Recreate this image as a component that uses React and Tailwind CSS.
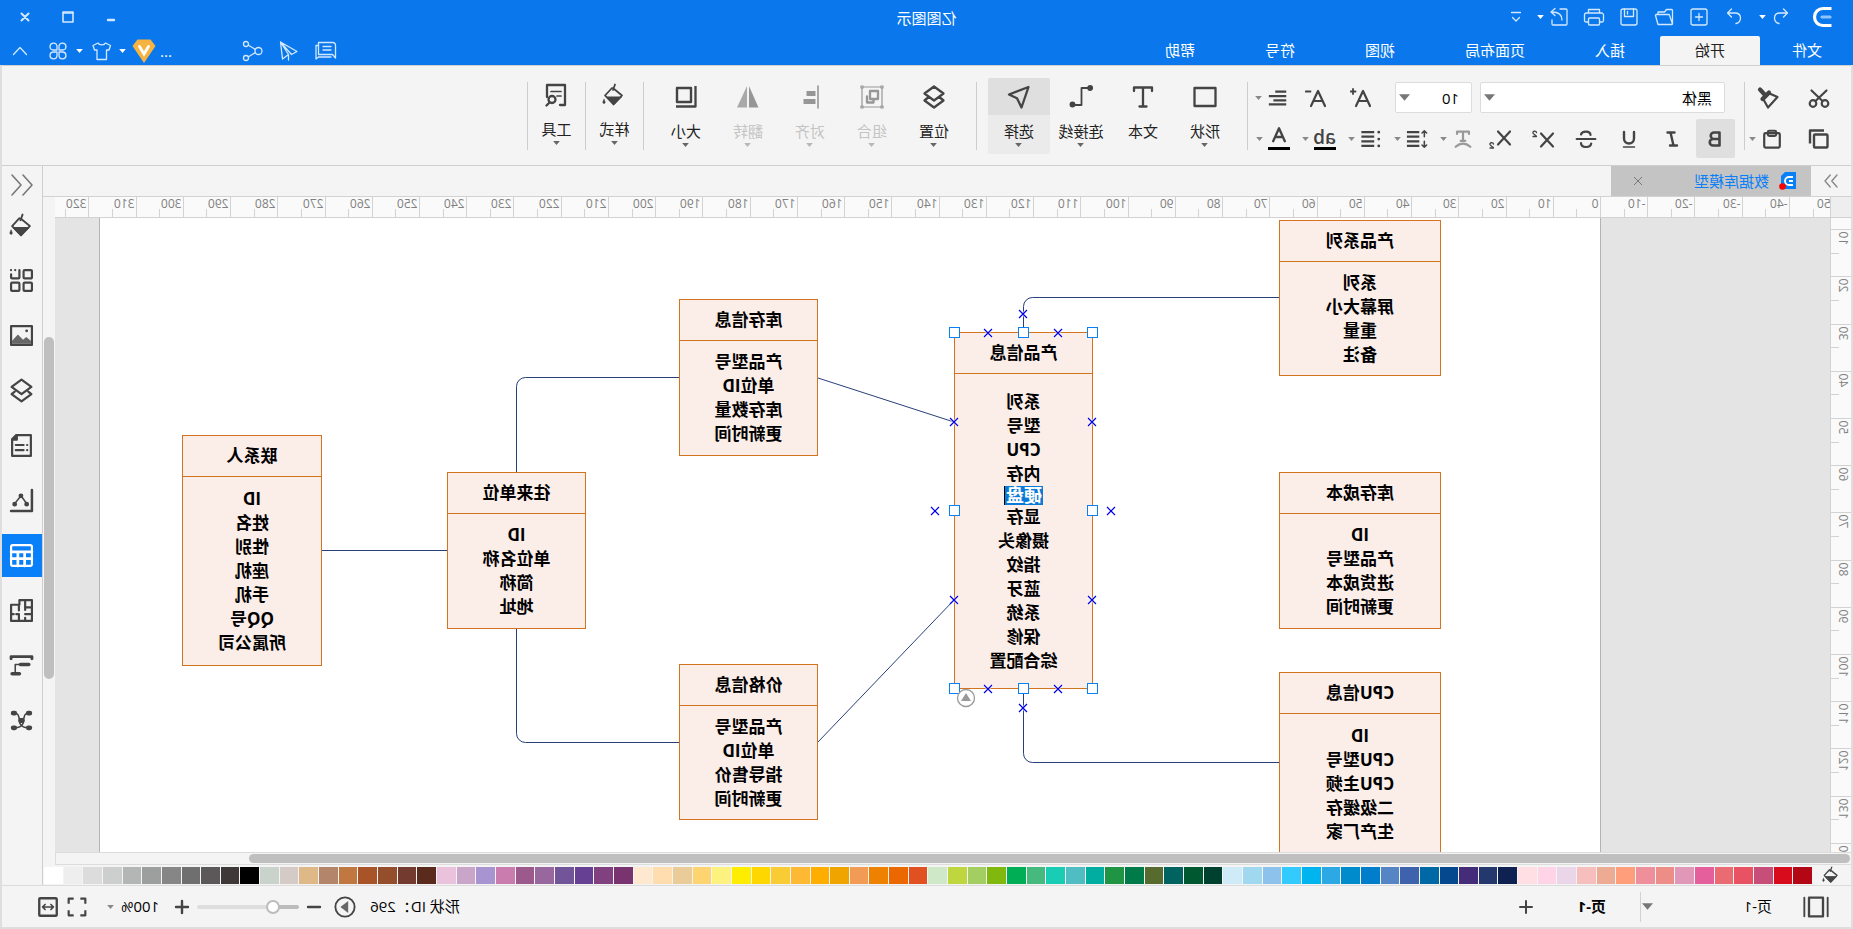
import React, { useState } from 'react';

const Icon = ({ size = 24, width = 1.4, className = '', children }) => (
  <svg
    width={size}
    height={size}
    viewBox="0 0 24 24"
    fill="none"
    stroke="currentColor"
    strokeWidth={width}
    strokeLinecap="round"
    strokeLinejoin="round"
    aria-hidden="true"
    className={`shrink-0 ${className}`}
  >
    {children}
  </svg>
);

const Caret = ({ big }) => (
  <svg width={big ? 11 : 7} height={big ? 7 : 4} viewBox="0 0 10 6" fill="currentColor" aria-hidden="true" className="shrink-0">
    <path d="M0 0h10L5 6z" />
  </svg>
);

const icons = {
  undo: <path d="M9.500 4 5.500 8l4 4M5.500 8H13c3.500 0 5.500 2.200 5.500 5 0 3-2 5-4.500 5.500" />,
  redo: <path d="M14.500 4l4 4-4 4M18.500 8H11c-3.500 0-5.500 2.200-5.500 5 0 3 2 5 4.500 5.500" />,
  add: <><rect x="4" y="4" width="16" height="16" rx="2" /><path d="M12 8.500v7M8.500 12h7" /></>,
  open: <path d="M3.500 19V5.500a1 1 0 0 1 1-1h5l2 2.500h6.500v2.500M3.500 19a1 1 0 0 0 1 .5h13.500l2.500-9a.8.8 0 0 0-.8-1H7.500a1 1 0 0 0-1 .7z" />,
  save: <><rect x="4" y="4" width="16" height="16" rx="2" /><path d="M7.500 4v7.500h9V4M13.500 6.500v2.500" /></>,
  print: <><path d="M6.500 8V4.500h11V8M6.500 17H4a1.500 1.500 0 0 1-1.500-1.500V10A2 2 0 0 1 4.500 8h15a2 2 0 0 1 2 2v5.500A1.500 1.500 0 0 1 20 17h-2.500" /><rect x="6.500" y="13" width="11" height="7" rx="1" /></>,
  exportFile: <><path d="M11 4H5a1 1 0 0 0-1 1v14a1 1 0 0 0 1 1h13a1 1 0 0 0 1-1v-4" /><path d="M9 15c0-5 3-8 10-8M16 3.500 20 7l-4 3.500" /></>,
  more: <path d="M7.500 7.500h9M8.500 12.500l3.500 3.500 3.500-3.500" />,
  close: <path d="M8.500 8.500l7 7M15.500 8.500l-7 7" />,
  maximize: <><rect x="7" y="7" width="10" height="10" /><path d="M7 8h10" /></>,
  minimize: <path d="M9 15h6" />,
  message: <><path d="M5 3.500h14.500V15.500H5.500l-3 3.500V6a2.500 2.500 0 0 1 2.500-2.500z" /><path d="M7 7.500h8M7 11h8M19.500 6.500H22v13.500l-2.500-2H7" /></>,
  send: <path d="M20.500 3 4 12.500l5.500 3zM20.500 3 18.500 20l-6-4.500zM20.500 3 12.500 15.500V21" />,
  share: <><circle cx="5.500" cy="12" r="3.500" /><circle cx="18" cy="5" r="2.500" /><circle cx="18" cy="19" r="2.500" /><path d="M8.600 10.400 11 9l4.500-2.700M8.600 13.600 11 15l4.500 2.700" /></>,
  shirt: <path d="M8.500 4 3.500 6.500 5 11h2.500v9.500h9.500V11h2.500L21 6.500 16 4c-1 2.500-6.500 2.500-7.500 0z" />,
  clover: <><path d="M11 11H7a3.500 3.500 0 1 1 4-4zM13 11h4a3.500 3.500 0 1 0-4-4zM11 13H7a3.500 3.500 0 1 0 4 4zM13 13h4a3.500 3.500 0 1 1-4 4z" /></>,
  up: <path d="M5.500 15.500 12 8.500l6.500 7" />,
  cut: <><circle cx="6" cy="17.500" r="3.300" /><circle cx="18" cy="17.500" r="3.300" /><path d="M4.500 4.500 15.500 15M19.500 4.500 8.500 15" /></>,
  painter: <><path d="M3.500 11 11.500 7.500l6 6-4.500 8z" /><path d="M12 6.500 18.500 13M15.500 9.500l5.500-6" strokeWidth="4.200" /></>,
  copy: <><rect x="3.500" y="7.500" width="13.500" height="13" rx="1" /><path d="M7 3.500h14v13" strokeLinecap="butt" /></>,
  paste: <><rect x="3.500" y="5.500" width="17" height="16" rx="1.500" /><rect x="7.500" y="3" width="9" height="5.500" rx="1.500" /></>,
  bigger: <><path d="M4 20l7-15 7 15M6.500 15h9" /><path d="M18.500 5.500h5M21 3v5" strokeWidth="1.800" /></>,
  smaller: <><path d="M4 20l7-15 7 15M6.500 15h9" /><path d="M18.500 5.500h5" strokeWidth="1.800" /></>,
  align: <path d="M3 5h12M3 10h19M3 14.500h14M3 19h19" strokeLinecap="butt" />,
  bold: <path d="M7.500 5.500h5.500a3.200 3.200 0 0 1 0 6.500H7.500zM7.500 12h6.500a3.200 3.200 0 0 1 0 6.500H7.500z" />,
  italic: <path d="M9.500 5.500h7M7 18.500h7M13.500 5.500l-3 13" />,
  underline: <><path d="M7 5v6.500a5 5 0 0 0 10 0V5" /><path d="M6.500 20h11" strokeWidth="1.500" /></>,
  strike: <><path d="M17 7.500C16 3.500 7.500 3.500 7.500 8M6.800 16.500c1 5 10.200 4.500 10.200-.5" /><path d="M2.500 12h19" strokeWidth="1.800" /></>,
  lineSpacing: <><path d="M9.500 4.500h13.500M9.500 9.500h13.500M9.500 14.500h13.500M9.500 19.500h13.500" strokeLinecap="butt" /><path d="M4 3v6.500M1.500 5.500 4 3 6.500 5.500M4 14.500V21M1.500 18.500 4 21l2.500-2.500" strokeWidth="1.700" /></>,
  bullets: <><path d="M8.500 4.500h14M8.500 9.500h14M8.500 14.500h14M8.500 19.500h14" strokeLinecap="butt" /><path d="M3.500 4.500h.1M3.500 12h.1M3.500 19.500h.1" strokeWidth="3" /></>,
  textArc: <><path d="M5.500 6.500V4h13v2.500M12 4v10M9.500 14h5" /><path d="M4 20.500c5-4.500 11-4.500 16 0" /></>,
  fontColor: <path d="M5 17 12 1.500 19 17M7.500 12h9" />,
  shape: <rect x="1.500" y="3" width="21" height="18" />,
  text: <path d="M3 6V2.500h18V6M12 2.500v19M8.500 21.500h7" />,
  connector: <><path d="M3 3h8.500v17h9" strokeWidth="1.800" /><circle cx="2.800" cy="3" r="1.800" fill="currentColor" /><circle cx="20.500" cy="19.500" r="1.800" fill="currentColor" /></>,
  select: <path d="M2.500 2 22 9.500l-8 3.800L9.500 22.500z" />,
  layers: <path d="M12 1.500 21.500 8.500 12 15.500 2.500 8.500zM5.500 13 2.500 15.500 12 22.500l9.500-7-3-2.500" />,
  group: <><rect x="2" y="2" width="20" height="20" strokeWidth="1.200" /><path d="M1 1h2v2H1zM21 1h2v2h-2zM1 21h2v2H1zM21 21h2v2h-2z" strokeWidth="1.200" fill="#f4f4f4" /><rect x="6" y="6" width="8" height="8" /><path d="M17 11.500v6h-6.500v-2" /></>,
  alignObj: <><path d="M4 1v22" strokeWidth="1.600" /><path d="M6.500 8.500h9M6.500 16.500h12" strokeWidth="5" strokeLinecap="butt" /></>,
  flip: <><path d="M11 1v21.500H1.500z" fill="currentColor" stroke="none" /><path d="M13 1v21.500h10z" fill="currentColor" stroke="none" opacity=".8" /></>,
  sizeIcon: <><rect x="7" y="3" width="14" height="14" strokeWidth="2.400" /><path d="M2.500 1v20.500H22" strokeLinecap="butt" /></>,
  bucket: <><path d="M11 1.500 13 7M12.500 5.500 4 12.500l8.500 9 8.500-9L14 5" strokeWidth="1.800" /><path d="M5 14h15l-7.500 7.500z" fill="currentColor" strokeWidth="1" /><path d="M22 16.500c1.800 2.500 1.200 4 0 4s-1.800-1.500 0-4z" fill="currentColor" strokeWidth=".6" /></>,
  tools: <><path d="M8 22H3V2h18V14" /><path d="M7 8.500h10M7 13h4" strokeWidth="1.700" /><circle cx="16" cy="16.500" r="3.500" /><path d="M18.500 19.500l3 3" /></>,
  right: <path d="M4 4l7 8-7 8M13 4l7 8-7 8" />,
  left: <path d="M11 2 2 12l9 10M22 2l-9 10 9 10" />,
  grid: <><rect x="2" y="2" width="8" height="8" rx="1" /><rect x="2" y="14" width="8" height="8" rx="1" /><rect x="14" y="14" width="8" height="8" rx="1" /><path d="M14 2v7a1 1 0 0 0 1 1h6a1 1 0 0 0 1-1V6M18 2h.1M22 2h.1" /></>,
  image: <><rect x="2" y="3" width="20" height="18" /><path d="M3 20v-3l4.500-3.500 3 2.500L15.500 11l5.500 6v3z" fill="currentColor" stroke="none" opacity=".8" /><path d="M7 7.500h.1" strokeWidth="2.600" /></>,
  doc: <><path d="M3 2h14l4 4v16H3z" /><path d="M16.500 2v4.500H21z" fill="currentColor" /><path d="M6.500 11.500h.1M6.500 16.500h.1M10 11.500h7.500M10 16.500h7.500" /></>,
  chart: <><path d="M2 2v20h20" strokeWidth="2.400" /><path d="M7 15 12.500 7.500l6 7.500" strokeWidth="1.500" /><path d="M7 15.500h.1M12.500 7.500h.1M18.500 15.500h.1" strokeWidth="4.500" /></>,
  table: <><rect x="2" y="2" width="20" height="20" rx="1.500" /><path d="M2 8.500h20M2 15h20M9 8.500V22M15.500 8.500V22" strokeWidth="2.600" /></>,
  floor: <><path d="M2 2h12v4.500h8V22H2zM2 9h6.500V2M8.500 9v2.500M2 15.500h6.500M8.500 22v-3M14.500 6.500V12M14.500 22v-6.500H17M19.500 15.500H22" /></>,
  presentation: <><path d="M2 3.500h20M2 3.500v2M22 3.500v2" strokeWidth="2.800" /><path d="M5 11h8M14 20h7" strokeWidth="3.400" /><path d="M13 11h5v9" strokeWidth="1.500" /></>,
  mindmap: <><path d="M6 5c5 0 2 7 6 7s1 7-6 7M18 5c-5 0-2 7-6 7s-1 7 6 7" strokeWidth="1.500" /><path d="M4 5h1.500M4 19h1.500M18.500 5H20M18.500 19H20M11 12h2" strokeWidth="4.600" /></>,
  pages: <><rect x="6" y="4" width="12" height="16" /><path d="M2 4v16M22 4v16" strokeWidth="1.600" /></>,
  plus: <path d="M12 6v12M6 12h12" />,
  minus: <path d="M6 12h12" />,
  play: <><circle cx="12" cy="12" r="10.500" /><path d="M8.500 5.500v13l8.500-6.500z" fill="currentColor" stroke="none" opacity=".8" /></>,
  fullscreen: <path d="M2 8V2h6M16 2h6v6M22 16v6h-6M8 22H2v-6" strokeLinecap="butt" />,
  fit: <><rect x="1.500" y="1.500" width="21" height="21" rx="1" strokeWidth="2.800" /><path d="M5.500 12h13M8.500 9l-3 3 3 3M15.500 9l3 3-3 3" strokeWidth="2" /></>,
};

const quickAccess = [
  ['redo', '恢复'],
  ['add', '新建'],
  ['open', '打开'],
  ['save', '保存'],
  ['print', '打印'],
];

const menus = ['开始', '插入', '页面布局', '视图', '符号', '帮助'];

const shapeTools = [
  ['形状', 'shape'],
  ['文本', 'text'],
  ['连接线', 'connector'],
  ['选择', 'select'],
];

const arrangeTools = [
  ['位置', 'layers'],
  ['组合', 'group', true],
  ['对齐', 'alignObj', true],
  ['翻转', 'flip', true],
  ['大小', 'sizeIcon'],
];

const sidePanels = [
  ['bucket', '填充'],
  ['grid', '符号库'],
  ['image', '图片'],
  ['layers', '图层'],
  ['doc', '注释'],
  ['chart', '图表'],
  ['table', '表格'],
  ['floor', '平面图'],
  ['presentation', '演示'],
  ['mindmap', '思维导图'],
];

const palette = [
  '#b40715', '#d80b1c', '#c74e78', '#e95263', '#eb6b72', '#e55f9c', '#e197b7', '#ec8d87', '#ef8f9b', '#ff9e7a',
  '#edab94', '#f6bfbd', '#ead6e8', '#ffd4e6', '#ffdfe4', '#0f2150', '#24386d', '#452c78', '#06488e', '#0068a5',
  '#3f62ad', '#5585c5', '#007dcb', '#008bcd', '#2ca8e4', '#00b4f0', '#33cafe', '#8cc2ec', '#9fd8ef', '#cfebf7',
  '#00402f', '#005830', '#006360', '#586b2e', '#007a48', '#1f9442', '#00ada0', '#50bdc3', '#18cdb4', '#46ba7e',
  '#00ae55', '#81b80e', '#a3cf62', '#bfd63f', '#cfe8c8', '#e05020', '#eb6800', '#ee8200', '#f29b54', '#efa400',
  '#ffae00', '#fdb933', '#f9cb34', '#ffd700', '#ffed00', '#fdf17f', '#fdd470', '#eacc98', '#ffddae', '#fee8d0',
  '#79336f', '#814080', '#664093', '#725499', '#98679e', '#9b598c', '#cb7caf', '#a894d1', '#c8a5c9', '#ebc2db',
  '#5a2a1c', '#733a30', '#944e2b', '#a95428', '#c17840', '#b3866b', '#deb887', '#d5cbc6', '#cad3cb', '#000000',
  '#3f3838', '#5a5859', '#6f6f6f', '#868686', '#9c9f9d', '#b2b6b5', '#cccfce', '#dcdcdc', '#eeeeee', '#ffffff',
];

const entities = [
  { title: '产品系列', x: 159, y: 2, w: 162, h: 156, fields: ['系列', '屏幕大小', '重量', '备注'] },
  { title: '库存成本', x: 159, y: 254, w: 162, h: 157, fields: ['ID', '产品型号', '进货成本', '更新时间'] },
  { title: 'CPU信息', x: 159, y: 454, w: 162, h: 182, fields: ['ID', 'CPU型号', 'CPU主频', '二级缓存', '生产厂家'] },
  { title: '产品信息', x: 507, y: 114, w: 139, h: 357, editing: '硬盘', fields: ['系列', '型号', 'CPU', '内存', '硬盘', '显存', '摄像头', '指纹', '蓝牙', '系统', '保修', '综合配置'] },
  { title: '库存信息', x: 782, y: 81, w: 139, h: 157, fields: ['产品型号', '单位ID', '库存数量', '更新时间'] },
  { title: '价格信息', x: 782, y: 446, w: 139, h: 156, fields: ['产品型号', '单位ID', '指导售价', '更新时间'] },
  { title: '往来单位', x: 1014, y: 254, w: 139, h: 157, fields: ['ID', '单位名称', '简称', '地址'] },
  { title: '联系人', x: 1278, y: 217, w: 140, h: 231, fields: ['ID', '姓名', '性别', '座机', '手机', 'QQ号', '所属公司'] },
];

const handles = [
  [507, 114], [576, 114], [645, 114],
  [507, 292], [645, 292],
  [507, 470], [576, 470], [645, 470],
];

const anchors = [
  [542, 115], [612, 115], [577, 96], [646, 204], [646, 382], [508, 204],
  [508, 382], [665, 293], [489, 293], [542, 471], [612, 471], [577, 490],
];

const range = (from, to) => Array.from({ length: to - from + 1 }, (_, i) => from + i);

const HorizontalRuler = () => (
  <svg className="block h-5 w-full overflow-visible bg-[#fafafa]" shapeRendering="crispEdges" aria-hidden="true">
    {range(-10, 65).map((n) => {
      const x = Math.round(229 + n * 23.62) + 0.5;
      return (
        <g key={n}>
          {x > 0 && <path d={n % 2 ? `M${x} 12V20` : `M${x} 0V20`} stroke="#d2d2d2" />}
          {n % 2 === 0 && <text x={x + 2} y="11" fontSize="12" fill="#808080">{n * 5}</text>}
        </g>
      );
    })}
  </svg>
);

const VerticalRuler = () => (
  <svg className="block h-full w-5 overflow-visible bg-[#fafafa]" shapeRendering="crispEdges" aria-hidden="true">
    {range(1, 28).map((n) => {
      const y = Math.round(n * 23.6 - 36) + 0.5;
      return (
        <g key={n}>
          {y > 0 && <path d={n % 2 ? `M12 ${y}H20` : `M0 ${y}H20`} stroke="#d2d2d2" />}
          {n % 2 === 0 && (
            <text transform={`translate(12 ${y + 2}) rotate(-90)`} textAnchor="end" fontSize="12" fill="#808080">{n * 5}</text>
          )}
        </g>
      );
    })}
  </svg>
);

const TitleButton = ({ icon, label, width = 1.3 }) => (
  <button type="button" aria-label={label} className="text-[#d3e8ff]">
    <Icon width={width}>{icons[icon]}</Icon>
  </button>
);

const DropButton = ({ icon, label, children, muted }) => (
  <button type="button" aria-label={label} className={`flex items-center ${muted ? 'text-[#999999]' : 'text-[#444444]'}`}>
    {children || <Icon size={22} width={2.4}>{icons[icon]}</Icon>}
    <span className="flex w-4 justify-center text-[#888888]"><Caret /></span>
  </button>
);

const BigButton = ({ label, icon, disabled, active, narrow, caret = true, onClick }) => (
  <button
    type="button"
    disabled={disabled}
    onClick={onClick}
    className={`flex h-[76px] flex-col items-center rounded-xs ${narrow ? 'w-[57px]' : 'w-[62px]'} ${active ? 'bg-[#ebebeb]' : ''} ${disabled ? 'text-[#c4c4c4]' : 'text-[#222222]'}`}
  >
    <span className={`flex h-[37px] w-full items-center justify-center rounded-t-xs ${active ? 'bg-[#dfdfdf]' : ''} ${disabled ? 'text-[#969696]' : 'text-[#444444]'}`}>
      <Icon width={2.3}>{icons[icon]}</Icon>
    </span>
    <span className="pt-1 text-[15px] leading-6">{label}</span>
    {caret && <span className={disabled ? 'text-[#b8b8b8]' : 'text-[#666666]'}><Caret /></span>}
  </button>
);

const Separator = () => <div className="mt-4 h-[68px] w-px shrink-0 bg-[#cccccc]" />;

const Entity = ({ entity }) => (
  <div
    className="absolute flex flex-col border border-[#d2731f] bg-[#fbede8] text-center text-[17px] font-bold text-black"
    style={{ left: entity.x, top: entity.y, width: entity.w, height: entity.h }}
  >
    <h2 className="h-[41px] shrink-0 border-b border-[#d2731f] leading-10">{entity.title}</h2>
    <ul className="flex flex-1 flex-col items-center justify-center leading-6">
      {entity.fields.map((field) =>
        field === entity.editing ? (
          <li key={field} className="border-r border-black bg-[#0a7ad8] px-px text-[18px] leading-[19px] text-white">{field}</li>
        ) : (
          <li key={field}>{field}</li>
        )
      )}
    </ul>
  </div>
);

const App = () => {
  const [zoom, setZoom] = useState(22);
  const [activeMenu, setActiveMenu] = useState('开始');
  const [activeTool, setActiveTool] = useState('选择');
  const [activePanel, setActivePanel] = useState('table');

  return (
    <div className="flex h-screen w-full -scale-x-100 flex-col overflow-hidden bg-[#dedede] font-['Open_Sans','Noto_Sans_CJK_SC',sans-serif] text-[15px]">
      <header className="shrink-0 bg-[#0a78ec] text-white">
        <div className="flex h-9 items-start pt-[5px]">
          <div className="flex flex-1 items-center">
            <svg width="24" height="24" viewBox="0 0 24 24" fill="none" stroke="#fff" strokeWidth="3.200" className="ml-5" aria-hidden="true">
              <path d="M1.500 3.500h8.500a8.200 8.200 0 0 1 0 17H1.500" />
              <path d="M3 12h8" stroke="#8fc3fb" strokeLinecap="round" />
            </svg>
            <div className="ml-4 flex items-center gap-[11px]">
              <div className="flex items-center">
                <TitleButton icon="undo" label="撤销" />
                <span className="flex w-3 justify-center"><Caret /></span>
              </div>
              {quickAccess.map(([icon, label]) => (
                <TitleButton key={icon} icon={icon} label={label} />
              ))}
              <div className="flex items-center">
                <TitleButton icon="exportFile" label="导出" />
                <span className="flex w-3 justify-center"><Caret /></span>
              </div>
            </div>
            <div className="ml-[7px] flex"><TitleButton icon="more" label="更多" /></div>
          </div>
          <h1 className="leading-[26px]">亿图图示</h1>
          <div className="flex flex-1 justify-end">
            <div className="mr-[13px] flex gap-[19px]">
              <TitleButton icon="minimize" label="最小化" width={2.4} />
              <TitleButton icon="maximize" label="最大化" width={1.6} />
              <TitleButton icon="close" label="关闭" width={2} />
            </div>
          </div>
        </div>
        <div className="flex h-[29px] items-center">
          <nav className="flex h-full">
            <button type="button" className="pr-8 pl-[31px]">文件</button>
            {menus.map((menu) => (
              <button
                key={menu}
                type="button"
                onClick={() => setActiveMenu(menu)}
                className={`rounded-t-xs px-[35px] ${activeMenu === menu ? 'bg-[#f4f4f4] text-[#222222]' : ''}`}
              >
                {menu}
              </button>
            ))}
          </nav>
          <div className="ml-auto flex items-center pr-2">
            <div className="mr-16 flex gap-[13px]">
              <TitleButton icon="message" label="消息" />
              <TitleButton icon="send" label="发送" />
              <TitleButton icon="share" label="分享" />
            </div>
            <button type="button" aria-label="会员" className="flex items-center">
              <span className="w-5 text-center leading-6">...</span>
              <svg width="24" height="26" viewBox="0 0 24 26" aria-hidden="true">
                <path d="M5.500 1.500h13L23.500 8 12 25 .5 8z" fill="#f6b340" />
                <path d="M7.500 8.500 12 16l4.500-7.500" fill="none" stroke="#fff" strokeWidth="2.800" strokeLinecap="round" />
              </svg>
              <span className="flex w-[18px] justify-center"><Caret /></span>
            </button>
            <div className="flex items-center">
              <TitleButton icon="shirt" label="主题" />
              <span className="flex w-5 justify-center"><Caret /></span>
            </div>
            <TitleButton icon="clover" label="应用" />
            <div className="ml-[14px] flex"><TitleButton icon="up" label="收起功能区" /></div>
          </div>
        </div>
      </header>

      <div className="flex min-h-0 flex-1 flex-col border-x-2 border-b-2 border-[#dedede] bg-[#f4f4f4]">
        <section className="flex h-[101px] shrink-0 border-y border-[#cfcfcf] text-[#444444]">
          <div className="flex w-[106px] shrink-0 flex-col gap-[6px] pt-4 pl-5">
            <div className="flex h-[31px] items-center gap-[26px]">
              <button type="button" aria-label="剪切"><Icon width={2.2}>{icons.cut}</Icon></button>
              <button type="button" aria-label="格式刷"><Icon width={2.2}>{icons.painter}</Icon></button>
            </div>
            <div className="flex h-[39px] items-center gap-6">
              <button type="button" aria-label="复制"><Icon width={2.4}>{icons.copy}</Icon></button>
              <DropButton icon="paste" label="粘贴" />
            </div>
          </div>
          <Separator />
          <div className="flex shrink-0 flex-col gap-[6px] pt-4 pr-[3px] pl-[9px]">
            <div className="flex h-[31px] items-center pl-[10px] text-black">
              <div className="relative">
                <select aria-label="字体" className="h-[31px] w-[245px] appearance-none rounded-xs border border-[#dadce0] bg-white pl-3 leading-6">
                  <option>黑体</option>
                </select>
                <span className="pointer-events-none absolute top-3 right-1 text-[#777777]"><Caret big /></span>
              </div>
              <div className="relative ml-2">
                <select aria-label="字号" className="h-[31px] w-[77px] appearance-none rounded-xs border border-[#dadce0] bg-white pl-3 leading-6">
                  <option>10</option>
                </select>
                <span className="pointer-events-none absolute top-3 right-1 text-[#777777]"><Caret big /></span>
              </div>
              <div className="ml-[21px] flex gap-[21px] text-[#444444]">
                <button type="button" aria-label="增大字号"><Icon width={2.2}>{icons.bigger}</Icon></button>
                <button type="button" aria-label="减小字号"><Icon width={2.2}>{icons.smaller}</Icon></button>
              </div>
              <div className="ml-4"><DropButton icon="align" label="对齐方式" /></div>
            </div>
            <div className="flex h-[39px] items-center">
              <button type="button" aria-label="加粗" className="flex size-[39px] items-center justify-center rounded-xs bg-[#dfdfdf]">
                <Icon width={2.6}>{icons.bold}</Icon>
              </button>
              <div className="ml-3 flex items-center gap-[19px]">
                <button type="button" aria-label="倾斜"><Icon width={2.4}>{icons.italic}</Icon></button>
                <button type="button" aria-label="下划线"><Icon width={2.4}>{icons.underline}</Icon></button>
                <button type="button" aria-label="删除线"><Icon width={2.2}>{icons.strike}</Icon></button>
                <button type="button" aria-label="上标">
                  <Icon width={2.2}><path d="M2 6.500l12 13M14 6.500l-12 13" /><path d="M18.500 5.500c.5-2 4-1.500 3.500.5-.5 1.500-3.500 2.500-3.500 3.500H22" strokeWidth="1.300" /></Icon>
                </button>
                <button type="button" aria-label="下标">
                  <Icon width={2.2}><path d="M2 4.500l12 13M14 4.500l-12 13" /><path d="M18.500 17c.5-2 4-1.500 3.500.5-.5 1.500-3.500 2.500-3.500 3.500H22" strokeWidth="1.300" /></Icon>
                </button>
              </div>
              <div className="ml-[14px] flex items-center gap-2">
                <DropButton icon="textArc" label="文字弯曲" muted />
                <DropButton icon="lineSpacing" label="行距" />
                <DropButton icon="bullets" label="项目符号" />
                <DropButton label="突出显示">
                  <span className="w-[22px] border-b-3 border-black text-center text-[19px] leading-5 font-semibold">ab</span>
                </DropButton>
                <DropButton label="字体颜色">
                  <span className="flex w-[22px] justify-center border-b-3 border-black"><Icon size={20} width={2.8}>{icons.fontColor}</Icon></span>
                </DropButton>
              </div>
            </div>
          </div>
          <Separator />
          <div className="mx-[11px] flex shrink-0 pt-3">
            {shapeTools.map(([label, icon]) => (
              <BigButton
                key={label}
                label={label}
                icon={icon}
                active={activeTool === label}
                caret={label !== '文本'}
                onClick={() => setActiveTool(label)}
              />
            ))}
          </div>
          <Separator />
          <div className="mx-[11px] flex shrink-0 pt-3">
            {arrangeTools.map(([label, icon, disabled]) => (
              <BigButton key={label} label={label} icon={icon} disabled={disabled} />
            ))}
          </div>
          <Separator />
          <div className="pt-[10px]"><BigButton label="样式" icon="bucket" narrow /></div>
          <Separator />
          <div className="pt-[10px]"><BigButton label="工具" icon="tools" narrow /></div>
          <Separator />
        </section>

        <div className="flex min-h-0 flex-1">
          <main className="flex min-w-0 flex-1 flex-col">
            <div className="flex h-[30px] shrink-0">
              <button type="button" aria-label="展开" className="flex w-10 items-center justify-center text-[#888888]">
                <Icon size={18} width={1.8}>{icons.right}</Icon>
              </button>
              <div className="flex w-[200px] items-center bg-[#c4c4c4] pr-[22px] pl-[14px]">
                <svg width="18" height="18" viewBox="0 0 18 18" aria-hidden="true">
                  <path d="M1 0h11l4 4v13H1z" fill="#0a80f8" />
                  <path d="M4 5h4a4 4 0 0 1 0 8H4M4 9h4" fill="none" stroke="#fff" strokeWidth="1.800" />
                  <circle cx="14.500" cy="14.500" r="3.300" fill="#f00" />
                </svg>
                <a href="#model" className="ml-[10px] text-[#0a80f8]">数据库模型</a>
                <button type="button" aria-label="关闭文档" className="ml-auto flex text-[#777777]">
                  <svg width="10" height="10" viewBox="0 0 10 10" stroke="currentColor" aria-hidden="true"><path d="M1 1l8 8M9 1 1 9" /></svg>
                </button>
              </div>
            </div>

            <div className="flex min-h-0 flex-1 border-t border-[#d2d2d2]">
              <div className="relative z-10 flex w-[21px] shrink-0 flex-col border-r border-[#d2d2d2]">
                <div className="h-[21px] shrink-0 border-b border-[#d2d2d2] bg-[#eeeeee]" />
                <div className="min-h-0 flex-1 overflow-hidden"><VerticalRuler /></div>
              </div>
              <div className="flex min-w-0 flex-1 flex-col">
                <div className="shrink-0 border-b border-[#d2d2d2]"><HorizontalRuler /></div>
                <div className="flex min-h-0 flex-1 overflow-hidden bg-[#e4e4e4]">
                  <div className="relative mr-11 ml-[229px] flex-1 border-x border-[#b4b4b4] bg-white">
                    <svg className="absolute inset-0 size-full" fill="none" stroke="#27407a" aria-hidden="true">
                      <path d="M321 79.500H567.500a9 9 0 0 1 9 9V114" />
                      <path d="M321 544.500H567.500a9 9 0 0 0 9-9V471" />
                      <path d="M782 160 646 204M782 524 646 382" />
                      <path d="M921 159.500H1074.500a9 9 0 0 1 9 9V254" />
                      <path d="M921 524.500H1074.500a9 9 0 0 0 9-9V411" />
                      <path d="M1153 332.500H1278" />
                    </svg>
                    {entities.map((entity) => (
                      <Entity key={entity.title} entity={entity} />
                    ))}
                    <svg className="pointer-events-none absolute inset-0 size-full" fill="none" aria-hidden="true">
                      {anchors.map(([x, y]) => (
                        <g key={`${x}-${y}`}>
                          <path d={`M${x - 4} ${y - 4}l8 8m0-8l-8 8`} stroke="#fff" strokeWidth="3" opacity=".7" />
                          <path d={`M${x - 4} ${y - 4}l8 8m0-8l-8 8`} stroke="#0000e6" strokeWidth="1.200" />
                        </g>
                      ))}
                      {handles.map(([x, y]) => (
                        <rect key={`${x}-${y}`} x={x - 4.5} y={y - 4.5} width="10" height="10" fill="#fff" stroke="#0a80f8" />
                      ))}
                      <circle cx="634" cy="480" r="8.500" fill="#fff" stroke="#999" strokeWidth="1.300" />
                      <path d="M634 475l5 8h-10z" fill="#999" />
                    </svg>
                  </div>
                </div>
              </div>
              <div className="w-3 shrink-0 px-px pt-[140px]">
                <div className="h-[342px] rounded-full bg-[#bfbfbf]" />
              </div>
            </div>

            <div className="mr-3 h-[13px] shrink-0 border-y border-r border-[#dcdcdc] pt-px pr-[193px] pl-px">
              <div className="h-[9px] rounded-full bg-[#bfbfbf]" />
            </div>
            <div className="flex h-5 shrink-0 items-center">
              <button type="button" aria-label="填充颜色" className="flex w-[39px] justify-center text-[#444444]">
                <Icon size={18}>{icons.bucket}</Icon>
              </button>
              <div className="flex h-[17px] flex-1 gap-px pr-px">
                {palette.map((color) => (
                  <button key={color} type="button" aria-label={color} className="flex-1" style={{ backgroundColor: color }} />
                ))}
              </div>
            </div>
          </main>

          <aside className="flex w-[41px] shrink-0 flex-col border-l border-[#cfcfcf] text-[#444444]">
            <button type="button" aria-label="折叠面板" className="flex h-[38px] shrink-0 items-center justify-center text-[#777777]">
              <Icon width={1.6}>{icons.left}</Icon>
            </button>
            <div className="flex flex-col gap-3">
              {sidePanels.map(([icon, label]) => (
                <button
                  key={icon}
                  type="button"
                  aria-label={label}
                  onClick={() => setActivePanel(icon)}
                  className={`flex h-[43px] items-center justify-center pl-px ${activePanel === icon ? 'bg-[#0a80f8] text-white' : ''}`}
                >
                  <Icon size={25} width={2.1}>{icons[icon]}</Icon>
                </button>
              ))}
            </div>
          </aside>
        </div>

        <footer className="flex h-[42px] shrink-0 items-center border-t border-[#dcdcdc] text-black">
          <button type="button" aria-label="页面列表" className="ml-[21px] text-[#444444]"><Icon size={28} width={2}>{icons.pages}</Icon></button>
          <button type="button" className="ml-[30px] flex w-[130px] items-center justify-between">
            <span>页-1</span>
            <span className="text-[#777777]"><Caret big /></span>
          </button>
          <div className="ml-px h-[30px] w-px bg-[#d2d2d2]" />
          <button type="button" className="ml-[34px] font-bold">页-1</button>
          <button type="button" aria-label="添加页" className="ml-10 text-[#444444]"><Icon width={2}>{icons.plus}</Icon></button>
          <p className="ml-auto">形状 ID：296</p>
          <button type="button" aria-label="播放" className="ml-[14px] text-[#444444]"><Icon size={22} width={2}>{icons.play}</Icon></button>
          <button type="button" aria-label="缩小" className="ml-2 text-[#444444]"><Icon width={2.4}>{icons.minus}</Icon></button>
          <input
            type="range"
            aria-label="缩放"
            value={zoom}
            onChange={(e) => setZoom(e.target.value)}
            className="mx-[3px] h-1 w-[102px] appearance-none rounded-full bg-linear-to-r from-[#bcbcbc] from-27% to-[#dedede] to-27% [&::-webkit-slider-thumb]:size-[14px] [&::-webkit-slider-thumb]:appearance-none [&::-webkit-slider-thumb]:rounded-full [&::-webkit-slider-thumb]:border-2 [&::-webkit-slider-thumb]:border-[#bcbcbc] [&::-webkit-slider-thumb]:bg-white"
          />
          <button type="button" aria-label="放大" className="text-[#444444]"><Icon width={2.4}>{icons.plus}</Icon></button>
          <button type="button" className="ml-[11px] flex items-center gap-[7px]">
            100%
            <span className="text-[#888888]"><Caret /></span>
          </button>
          <button type="button" aria-label="全屏" className="ml-5 text-[#444444]"><Icon size={20} width={2.6}>{icons.fullscreen}</Icon></button>
          <button type="button" aria-label="适应宽度" className="mr-9 ml-[9px] text-[#444444]"><Icon size={20}>{icons.fit}</Icon></button>
        </footer>
      </div>
    </div>
  );
};

export default App;
